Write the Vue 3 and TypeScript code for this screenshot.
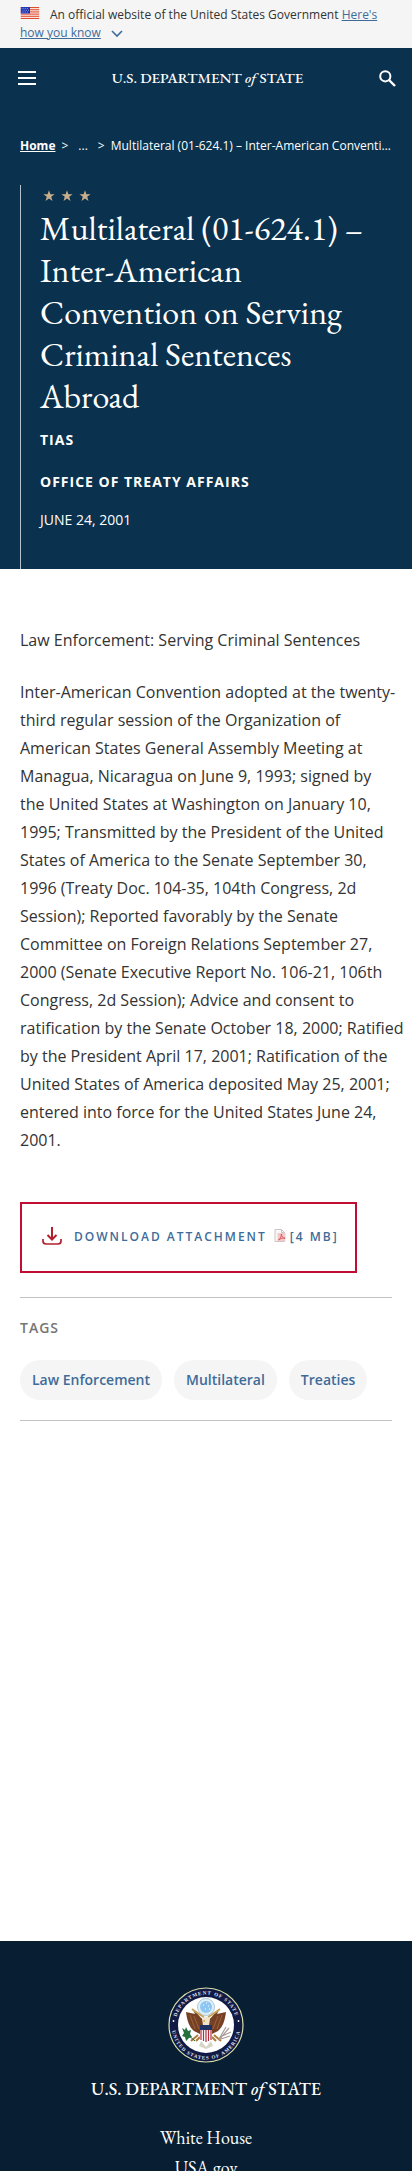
<script setup lang="ts">
interface Crumb {
  label: string
  href?: string
}

const body: string[] = [
  'Law Enforcement: Serving Criminal Sentences',
  `Inter-American Convention adopted at the twenty-third regular session of the Organization of
American States General Assembly Meeting at
Managua, Nicaragua on June 9, 1993; signed by
the United States at Washington on January 10,
1995; Transmitted by the President of the United
States of America to the Senate September 30,
1996 (Treaty Doc. 104-35, 104th Congress, 2d
Session); Reported favorably by the Senate
Committee on Foreign Relations September 27,
2000 (Senate Executive Report No. 106-21, 106th
Congress, 2d Session); Advice and consent to
ratification by the Senate October 18, 2000; Ratified
by the President April 17, 2001; Ratification of the
United States of America deposited May 25, 2001;
entered into force for the United States June 24,
2001.`,
]
const title = 'Multilateral (01-624.1) – Inter-American Convention on Serving Criminal Sentences Abroad'
const crumbs: Crumb[] = [{ label: 'Home', href: '#' }, { label: '...' }]
const tags: string[] = ['Law Enforcement', 'Multilateral', 'Treaties']
const footerLinks: string[] = ['White House', 'USA.gov']
const stripes: number[] = [0, 2, 4, 6, 8, 10, 12]
</script>

<template>
  <div class="page">
    <div class="banner">
      <svg class="flag" viewBox="0 0 20 13" aria-hidden="true">
        <rect width="20" height="13" fill="#fff" />
        <rect v-for="s in stripes" :key="s" :y="s" width="20" height="1" fill="#db3e1f" />
        <rect width="10" height="7" fill="#1e33b1" />
        <path d="M1 1.5h8M2 3.5h7M1 5.5h8" stroke="#fff" stroke-width=".7" stroke-dasharray=".8 1.2" />
      </svg>
      <span>An official website of the United States Government </span>
      <a href="#">Here's how you know</a>
      <svg class="chevron" viewBox="0 0 12 8" aria-hidden="true">
        <path d="M1 1l5 5 5-5" fill="none" stroke="#3e6c99" stroke-width="1.6" />
      </svg>
    </div>

    <header class="masthead">
      <button type="button" aria-label="Menu">
        <svg width="18" height="14" viewBox="0 0 18 14"><path d="M0 1h18M0 7h18M0 13h18" stroke="#fff" stroke-width="2" /></svg>
      </button>
      <a class="wordmark" href="#">U.S. DEPARTMENT <i>of</i> STATE</a>
      <button type="button" aria-label="Search">
        <svg width="17" height="17" viewBox="0 0 17 17" fill="none" stroke="#fff">
          <circle cx="6.3" cy="6.3" r="5.1" stroke-width="2" />
          <path d="M10 10l6 6" stroke-width="2.4" />
        </svg>
      </button>
    </header>

    <section class="hero">
      <nav class="crumbs" aria-label="Breadcrumb">
        <template v-for="c in crumbs" :key="c.label">
          <a v-if="c.href" :href="c.href">{{ c.label }}</a>
          <span v-else class="dots">{{ c.label }}</span>
          <span class="sep">&gt;</span>
        </template>
        <span class="current">{{ title }}</span>
      </nav>
      <div class="headline">
        <svg class="stars" viewBox="0 0 48 12" fill="#c9ae8c" aria-hidden="true">
          <path v-for="n in 3" :key="n" :transform="`translate(${(n - 1) * 18} 0)`" d="M6 .3l1.4 4h4.2L8.2 6.8l1.3 4.1L6 8.4l-3.5 2.5 1.3-4.1L.4 4.3h4.2z" />
        </svg>
        <h1>{{ title }}</h1>
        <p class="label">TIAS</p>
        <p class="label office">OFFICE OF TREATY AFFAIRS</p>
        <p class="date">JUNE 24, 2001</p>
      </div>
    </section>

    <main>
      <p v-for="p in body" :key="p" class="copy">{{ p }}</p>

      <a class="download" href="#">
        <svg class="tray" viewBox="0 0 20 18" fill="none" stroke="#b3202c" stroke-width="2" aria-hidden="true">
          <path d="M10 0v12M5.5 8l4.5 4.5L14.5 8" />
          <path d="M1 12v2q0 3 3 3h12q3 0 3-3v-2" stroke-width="1.7" />
        </svg>
        <span>DOWNLOAD ATTACHMENT</span>
        <svg class="pdf" viewBox="0 0 12 13" fill="none" aria-hidden="true">
          <path d="M1 .5h6.5l3 3v9H1z" fill="#faf7f7" stroke="#c2b9b9" stroke-width=".8" />
          <path d="M7.5 .5v3h3" stroke="#c2b9b9" stroke-width=".8" />
          <rect x="3.5" y="4" width="8" height="8" fill="#f2c9c9" />
          <path d="M4.5 11c2-1.5 3-4 2.8-6 .4 2.5 1.6 4 3.7 4.2-2.5-.4-4.5.3-6.5 1.8z" stroke="#d6373b" stroke-width=".7" />
        </svg>
        <span>[4 MB]</span>
      </a>

      <section class="tags">
        <h2>TAGS</h2>
        <ul>
          <li v-for="t in tags" :key="t"><a href="#">{{ t }}</a></li>
        </ul>
      </section>
    </main>

    <footer>
      <svg class="seal" viewBox="0 0 76 76" role="img" aria-label="Department of State seal">
        <defs>
          <path id="ring-top" d="M7.5 38a30.5 30.5 0 0 1 61 0" />
          <path id="ring-bottom" d="M3.5 38a34.5 34.5 0 0 0 69 0" />
        </defs>
        <circle cx="38" cy="38" r="37" fill="#111a45" stroke="#d9dfa8" stroke-width="1.2" />
        <circle cx="38" cy="38" r="28" fill="#fff" />
        <text class="ring"><textPath href="#ring-top" startOffset="50%" text-anchor="middle">DEPARTMENT OF STATE</textPath></text>
        <text class="ring"><textPath href="#ring-bottom" startOffset="50%" text-anchor="middle">UNITED STATES OF AMERICA</textPath></text>
        <circle cx="5.5" cy="34" r=".9" fill="#fff" />
        <circle cx="70.5" cy="34" r=".9" fill="#fff" />
        <circle cx="38" cy="20" r="8.5" fill="#e3eff7" stroke="#9dbcd4" stroke-width=".8" />
        <circle cx="38" cy="20" r="6" fill="#8ec8f2" />
        <path d="M35 18h1m2-2h1m1 3h1m-4 3h1m3 0h1" stroke="#fff" />
        <path d="M37 34c-4-2-7-8-12-11l2 4-9-2c1 8 3 15 8 19l6 3 5-2zM39 34c4-2 7-8 12-11l-2 4 9-2c-1 8-3 15-8 19l-6 3-5-2z" fill="#764025" />
        <path d="M22 28l5 14M26 29l5 13M54 28l-5 14M50 29l-5 13" stroke="#a56d42" stroke-width=".8" />
        <path d="M24 22q8 6 12 8M52 22q-8 6-12 8" stroke="#c7a45b" stroke-width="2" fill="none" />
        <path d="M34 32q4-5 8 0l-1 6h-6z" fill="#eee3cd" />
        <path d="M37 33l-3 1 3 1z" fill="#d7a434" />
        <path d="M30 48l-7 6m23-6l7 6M32 50l-4 4m16-4l4 4" stroke="#b07c3b" stroke-width="2" />
        <path d="M33 54l5 6 5-6 2 5-7 3-7-3z" fill="#d6d5c6" />
        <path d="M32 38h12v13q-2 4-6 4t-6-4z" fill="#fff" />
        <path d="M33 42v11m2.5-11v12m2.5-12v13m2.5-13v12m2.5-12v11" stroke="#b32e3c" stroke-width="1.2" />
        <path d="M32 38h12v5H32z" fill="#203264" />
        <path d="M14 41l3 2 1-3 2 4 3-1-1 4 2 3-3 1-3 3-1-4-3-1 2-3z" fill="#24713f" />
        <path d="M20 48l7 6" stroke="#24713f" />
        <path d="M51 53l10-12M52 50l11-5M51 52l7-12M53 52l9-3" stroke="#a99b96" stroke-width="1.2" />
      </svg>
      <a class="wordmark large" href="#">U.S. DEPARTMENT <i>of</i> STATE</a>
      <nav aria-label="Footer">
        <a v-for="l in footerLinks" :key="l" href="#">{{ l }}</a>
      </nav>
    </footer>
  </div>
</template>

<style>
body {
  margin: 0;
}
</style>

<style scoped>
.page {
  height: 100vh;
  overflow: hidden;
  background: #fff;
  color: #333;
  font-family: "Open Sans", sans-serif;
}

.banner {
  box-sizing: border-box;
  padding: 6px 20px;
  background: #f5f5f5;
  font-size: 12px;
  line-height: 18px;
}

.banner a {
  color: #3e6c99;
}

.flag {
  width: 20px;
  height: 12px;
  margin-right: 10px;
}

.chevron {
  width: 12px;
  height: 8px;
  margin-left: 10px;
  vertical-align: -1px;
}

.masthead {
  display: flex;
  align-items: center;
  justify-content: space-between;
  height: 60px;
  padding: 0 16px 0 18px;
  background: #0a314d;
}

button {
  display: flex;
  padding: 0;
  border: 0;
  background: none;
}

.wordmark {
  color: #fff;
  font-family: "EB Garamond", "Liberation Serif", serif;
  font-size: 15px;
  font-weight: 500;
  line-height: 24px;
  text-decoration: none;
}

.hero {
  padding: 29px 20px 0;
  background: #0a314d;
  color: #fff;
}

.crumbs {
  display: flex;
  gap: 6px;
  font-size: 12px;
  line-height: 18px;
  white-space: nowrap;
}

.crumbs a {
  color: #fff;
  font-weight: 700;
}

.dots {
  margin: 0 4px;
}

.current {
  overflow: hidden;
  text-overflow: ellipsis;
}

.headline {
  margin-top: 30px;
  padding: 5px 8px 39px 19px;
  border-left: 1px solid #b5c1ca;
}

.stars {
  display: block;
  width: 48px;
  height: 12px;
  margin-left: 3px;
}

h1 {
  margin: 5px 0 13px;
  font: 400 34px/42px "EB Garamond", "Liberation Serif", serif;
}

.label {
  margin: 0 0 22px;
  font-size: 14px;
  font-weight: 700;
  line-height: 20px;
  letter-spacing: 1px;
}

.office {
  margin-bottom: 18px;
}

.date {
  margin: 0;
  font-size: 14px;
  line-height: 20px;
}

main {
  padding: 57px 20px 520px;
}

.copy {
  margin: 0 -16px 24px 0;
  font-size: 16px;
  line-height: 28px;
  white-space: pre-line;
}

.download {
  display: flex;
  box-sizing: border-box;
  align-items: flex-start;
  width: fit-content;
  min-height: 71px;
  margin-top: 48px;
  padding: 23px 16px 22px 20px;
  border: 2px solid #c00d31;
  color: #3e6c99;
  font-size: 12px;
  font-weight: 600;
  line-height: 20px;
  letter-spacing: 2px;
  text-decoration: none;
}

.tray {
  width: 20px;
  height: 18px;
  margin-right: 12px;
}

.pdf {
  width: 12px;
  height: 13px;
  margin: 2px 4px 0 7px;
}

.tags {
  margin-top: 24px;
  padding: 20px 0;
  border: solid #bfc3c6;
  border-width: 1px 0;
}

h2 {
  margin: 0 0 22px;
  color: #757575;
  font-size: 14px;
  font-weight: 600;
  line-height: 20px;
  letter-spacing: 1px;
}

ul {
  display: flex;
  flex-wrap: wrap;
  gap: 12px;
  margin: 0;
  padding: 0;
  list-style: none;
}

li a {
  display: block;
  padding: 10px 12px;
  border-radius: 20px;
  background: #f5f5f5;
  color: #3e6c99;
  font-size: 14px;
  font-weight: 600;
  line-height: 20px;
  text-decoration: none;
}

footer {
  display: flex;
  flex-direction: column;
  align-items: center;
  padding: 46px 20px 24px;
  background: #071e33;
}

.seal {
  width: 76px;
  height: 76px;
}

.ring {
  fill: #e8ebf4;
  font: 700 5px "Liberation Serif", serif;
  letter-spacing: 1px;
}

.large {
  margin-top: 14px;
  font-size: 18px;
}

footer nav {
  display: flex;
  flex-direction: column;
  align-items: center;
  margin-top: 22px;
}

footer nav a {
  color: #fff;
  font: 400 18px/30px "EB Garamond", "Liberation Serif", serif;
  text-decoration: none;
}
</style>
